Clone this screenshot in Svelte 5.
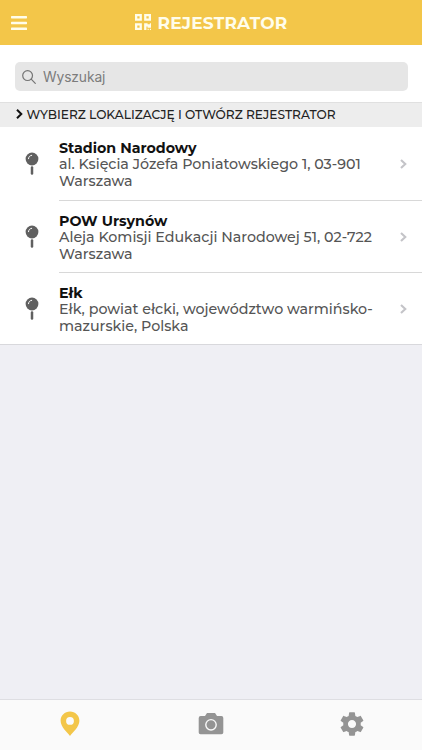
<script>
	let szukaj = '';
	let zakladka = 'lokalizacje';

	const lokalizacje = [
		{ id: 1, nazwa: 'Stadion Narodowy', adres: ['al. Księcia Józefa Poniatowskiego 1, 03-901', 'Warszawa'] },
		{ id: 2, nazwa: 'POW Ursynów', adres: ['Aleja Komisji Edukacji Narodowej 51, 02-722', 'Warszawa'] },
		{ id: 3, nazwa: 'Ełk', adres: ['Ełk, powiat ełcki, województwo warmińsko-', 'mazurskie, Polska'] }
	];
</script>

<div class="app">
	<header>
		<button class="menu" aria-label="Menu">
			<svg width="16" height="14" viewBox="0 0 16 14" fill="#fffdeb">
				<rect width="16" height="2.4" rx=".6" />
				<rect y="5.8" width="16" height="2.4" rx=".6" />
				<rect y="11.6" width="16" height="2.4" rx=".6" />
			</svg>
		</button>
		<h1>
			<svg class="qr" width="16" height="16" viewBox="0 0 448 448" fill="#fffdeb">
				<path fill-rule="evenodd" d="M0 192h192V0H0v192zM64 64h64v64H64V64zM256 0v192h192V0H256zm128 128h-64V64h64v64zM0 448h192V256H0v192zm64-128h64v64H64v-64zM416 256h32v128h-96v-32h-32v96h-64V256h96v32h64v-32zM416 416h32v32h-32v-32zM352 416h32v32h-32v-32z" />
			</svg>
			<span>REJESTRATOR</span>
		</h1>
	</header>

	<div class="search">
		<label class="search-box">
			<svg width="14" height="14" viewBox="0 0 14 14" fill="none" stroke="#747474" stroke-width="1.2" stroke-linecap="round">
				<circle cx="5.6" cy="5.6" r="4.9" />
				<path d="M9.2 9.2l4.1 4.1" />
			</svg>
			<input type="text" placeholder="Wyszukaj" bind:value={szukaj} />
		</label>
	</div>

	<div class="section-title">
		<svg width="7" height="10" viewBox="0 0 7 10" fill="none" stroke="#111" stroke-width="2">
			<path d="M1 .8L5.3 5L1 9.2" />
		</svg>
		<span>WYBIERZ LOKALIZACJĘ I OTWÓRZ REJESTRATOR</span>
	</div>

	<ul>
		{#each lokalizacje as lokalizacja (lokalizacja.id)}
			<li>
				<svg class="pin" width="14" height="24" viewBox="0 0 14 24">
					<circle cx="7" cy="7" r="6.4" fill="#606060" />
					<path d="M3.5 6.7C3.6 4.8 4.8 3.6 6.7 3.3" fill="none" stroke="#fff" stroke-width="1" stroke-linecap="round" />
					<path d="M7 15.6v6" stroke="#606060" stroke-width="2.5" stroke-linecap="round" />
				</svg>
				<div class="content">
					<div class="text">
						<h2>{lokalizacja.nazwa}</h2>
						{#each lokalizacja.adres as linia}
							<p>{linia}</p>
						{/each}
					</div>
					<svg class="chevron" width="7" height="10" viewBox="0 0 7 10" fill="none" stroke="#c4c4c8" stroke-width="2.1">
						<path d="M1 .9L5.3 5L1 9.1" />
					</svg>
				</div>
			</li>
		{/each}
	</ul>

	<nav>
		<button class:active={zakladka === 'lokalizacje'} on:click={() => (zakladka = 'lokalizacje')} aria-label="Lokalizacje">
			<svg width="20" height="26" viewBox="0 0 20 26">
				<path fill-rule="evenodd" d="M10 .5C4.8.5.6 4.6.6 9.7C.6 16 7.5 21.4 10 25C12.5 21.4 19.4 16 19.4 9.7C19.4 4.6 15.2.5 10 .5zM10 6a3.9 3.9 0 1 1 0 7.8a3.9 3.9 0 0 1 0-7.8z" />
			</svg>
		</button>
		<button class:active={zakladka === 'aparat'} on:click={() => (zakladka = 'aparat')} aria-label="Aparat">
			<svg width="26" height="26" viewBox="0 0 26 26">
				<path d="M9 2h8l2 3h4.2A2 2 0 0 1 25.3 7v14.5a1.8 1.8 0 0 1-1.8 1.8h-21A1.8 1.8 0 0 1 .7 21.5V7a2 2 0 0 1 2-2H7z" />
				<circle cx="13" cy="13.8" r="5.2" fill="none" stroke="#fafafa" stroke-width="1.4" />
			</svg>
		</button>
		<button class:active={zakladka === 'ustawienia'} on:click={() => (zakladka = 'ustawienia')} aria-label="Ustawienia">
			<svg width="28" height="28" viewBox="0 0 24 24">
				<path d="M19.43 12.98c.04-.32.07-.64.07-.98s-.03-.66-.07-.98l2.11-1.65c.19-.15.24-.42.12-.64l-2-3.46c-.12-.22-.39-.3-.61-.22l-2.49 1c-.52-.4-1.08-.73-1.69-.98l-.38-2.65C14.46 2.18 14.25 2 14 2h-4c-.25 0-.46.18-.49.42l-.38 2.65c-.61.25-1.17.59-1.69.98l-2.49-1c-.23-.09-.49 0-.61.22l-2 3.46c-.13.22-.07.49.12.64l2.11 1.65c-.04.32-.07.65-.07.98s.03.66.07.98l-2.11 1.65c-.19.15-.24.42-.12.64l2 3.46c.12.22.39.3.61.22l2.49-1c.52.4 1.08.73 1.69.98l.38 2.65c.03.24.24.42.49.42h4c.25 0 .46-.18.49-.42l.38-2.65c.61-.25 1.17-.59 1.69-.98l2.49 1c.23.09.49 0 .61-.22l2-3.46c.12-.22.07-.49-.12-.64l-2.11-1.65zM12 15.5c-1.93 0-3.5-1.57-3.5-3.5s1.57-3.5 3.5-3.5s3.5 1.57 3.5 3.5s-1.57 3.5-3.5 3.5z" />
			</svg>
		</button>
	</nav>
</div>

<style>
	:global(body) {
		background: #efeff4;
	}

	.app {
		display: flex;
		flex-direction: column;
		height: 100vh;
		font-family: Montserrat, Inter, 'Open Sans', sans-serif;
		background: #efeff4;
	}

	button {
		display: flex;
		padding: 0;
		border: none;
		background: none;
		cursor: pointer;
	}

	header {
		display: grid;
		grid-template-columns: 1fr auto 1fr;
		align-items: center;
		height: 45px;
		background: #f3c649;
	}

	.menu {
		margin-left: 11px;
	}

	h1 {
		display: flex;
		align-items: center;
		gap: 7px;
		margin: 0;
		color: #fffdeb;
		font-size: 17px;
		font-weight: 700;
		line-height: 20px;
		letter-spacing: 0.2px;
	}

	.qr {
		margin-bottom: 1px;
	}

	.search {
		padding: 17px 14.5px 11px;
		background: #fff;
	}

	.search-box {
		display: flex;
		align-items: center;
		gap: 7px;
		height: 29px;
		padding: 0 7.5px;
		border-radius: 5px;
		background: #e6e6e6;
	}

	input {
		flex: 1;
		padding: 0;
		border: none;
		outline: none;
		background: none;
		font: 13.8px Inter, sans-serif;
		letter-spacing: -0.1px;
	}

	input::placeholder {
		color: #7c7c7c;
		opacity: 1;
	}

	.section-title {
		display: flex;
		align-items: center;
		gap: 4px;
		box-sizing: border-box;
		height: 25px;
		padding: 0 0 2px 15.5px;
		border-top: 1px solid #e0e0e0;
		background: #ededed;
		color: #222;
		font-size: 12.2px;
		font-weight: 500;
		white-space: nowrap;
	}

	ul {
		margin: 0;
		padding: 0;
		list-style: none;
		background: #fff;
		border-bottom: 1px solid #d8d8dc;
	}

	li {
		display: flex;
		align-items: center;
	}

	.pin {
		flex: none;
		margin: 0 20px 0 25px;
	}

	.content {
		display: flex;
		flex: 1;
		align-items: center;
		justify-content: space-between;
		box-sizing: border-box;
		height: 74px;
		padding: 2px 15px 0 0;
		border-bottom: 1px solid #d8d8d8;
	}

	li:nth-child(2) .content {
		height: 72px;
	}

	li:last-child .content {
		height: 71px;
		border-bottom: none;
	}

	.chevron {
		margin-bottom: 2px;
	}

	h2,
	p {
		margin: 0;
		font-size: 14.24px;
		line-height: 16.2px;
		white-space: nowrap;
	}

	h2 {
		color: #111;
		font-weight: 700;
	}

	p {
		color: #555;
		font-weight: 500;
	}

	nav {
		display: grid;
		grid-template-columns: repeat(3, 1fr);
		box-sizing: border-box;
		height: 51px;
		margin-top: auto;
		padding-bottom: 2px;
		border-top: 1px solid #dedee2;
		background: #fafafa;
	}

	nav button {
		align-items: center;
		justify-content: center;
		fill: #949494;
	}

	nav button.active {
		fill: #f3c649;
	}
</style>
